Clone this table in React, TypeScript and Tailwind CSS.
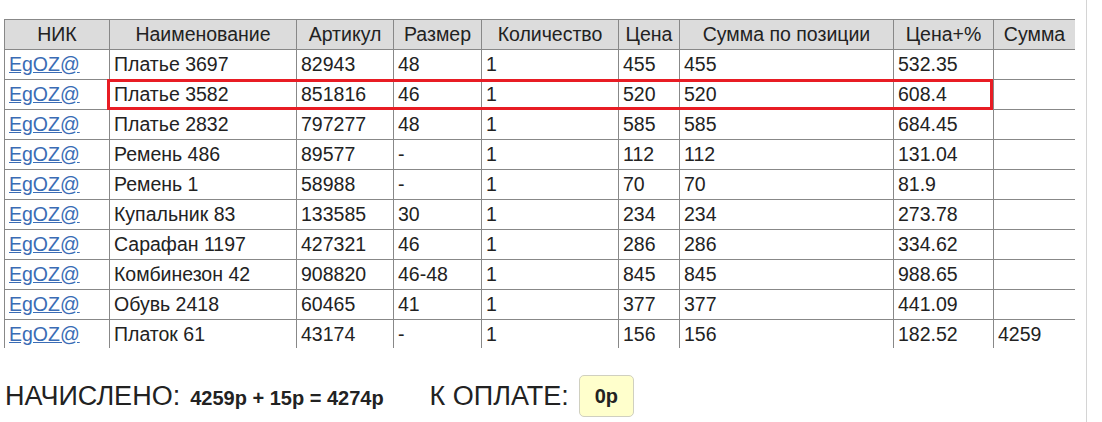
import React from "react";

const rows: string[][] = [
  ["Платье 3697", "82943", "48", "1", "455", "455", "532.35", ""],
  ["Платье 3582", "851816", "46", "1", "520", "520", "608.4", ""],
  ["Платье 2832", "797277", "48", "1", "585", "585", "684.45", ""],
  ["Ремень 486", "89577", "-", "1", "112", "112", "131.04", ""],
  ["Ремень 1", "58988", "-", "1", "70", "70", "81.9", ""],
  ["Купальник 83", "133585", "30", "1", "234", "234", "273.78", ""],
  ["Сарафан 1197", "427321", "46", "1", "286", "286", "334.62", ""],
  ["Комбинезон 42", "908820", "46-48", "1", "845", "845", "988.65", ""],
  ["Обувь 2418", "60465", "41", "1", "377", "377", "441.09", ""],
  ["Платок 61", "43174", "-", "1", "156", "156", "182.52", "4259"],
];

const headers = ["НИК", "Наименование", "Артикул", "Размер", "Количество", "Цена", "Сумма по позиции", "Цена+%", "Сумма"];
const widths = [105, 187, 97, 88, 137, 61, 214, 100, 82];

export default function App() {
  return (
    <div className="h-[422px] w-[1087px] border-r border-[#d4d4d4] bg-white text-[#222] font-['Liberation_Sans',Arial,sans-serif]">
      <div className="pt-[19px] pl-1">
        <div className="relative h-[329px] w-[1071px] overflow-hidden">
          <table className="table-fixed border-collapse w-[1071px] text-[19.5px] leading-none">
            <colgroup>
              {widths.map((w, i) => (
                <col key={i} style={{ width: w }} />
              ))}
            </colgroup>
            <thead>
              <tr className="h-[30px] bg-[#dcdcdc]">
                {headers.map((h) => (
                  <th key={h} className="border border-[#888] font-normal text-center px-1 whitespace-nowrap">
                    {h}
                  </th>
                ))}
              </tr>
            </thead>
            <tbody>
              {rows.map((r, i) => (
                <tr key={i} className="h-[30px]">
                  <td className="border border-[#888] px-1">
                    <a href="#" className="text-[#3a6cb5] underline">EgOZ@</a>
                  </td>
                  {r.map((c, j) => (
                    <td key={j} className="border border-[#888] px-1 whitespace-nowrap">
                      {c}
                    </td>
                  ))}
                </tr>
              ))}
            </tbody>
          </table>
          <div className="absolute left-[103px] top-[60px] w-[886px] h-[31px] border-[3px] border-[#e81c24]" />
        </div>
        <div className="mt-[27px] flex items-center h-[42px] pl-px">
          <span className="text-[27px] leading-none">НАЧИСЛЕНО:</span>
          <span className="ml-[10px] text-[20px] font-bold leading-none mt-1">4259р + 15р = 4274р</span>
          <span className="ml-[46px] text-[27px] leading-none">К ОПЛАТЕ:</span>
          <span className="ml-[10px] flex items-center justify-center w-[55px] h-[42px] rounded-[5px] border border-[#d0d0c0] bg-[#ffffcc] text-[20px] font-bold">
            0р
          </span>
        </div>
      </div>
    </div>
  );
}
